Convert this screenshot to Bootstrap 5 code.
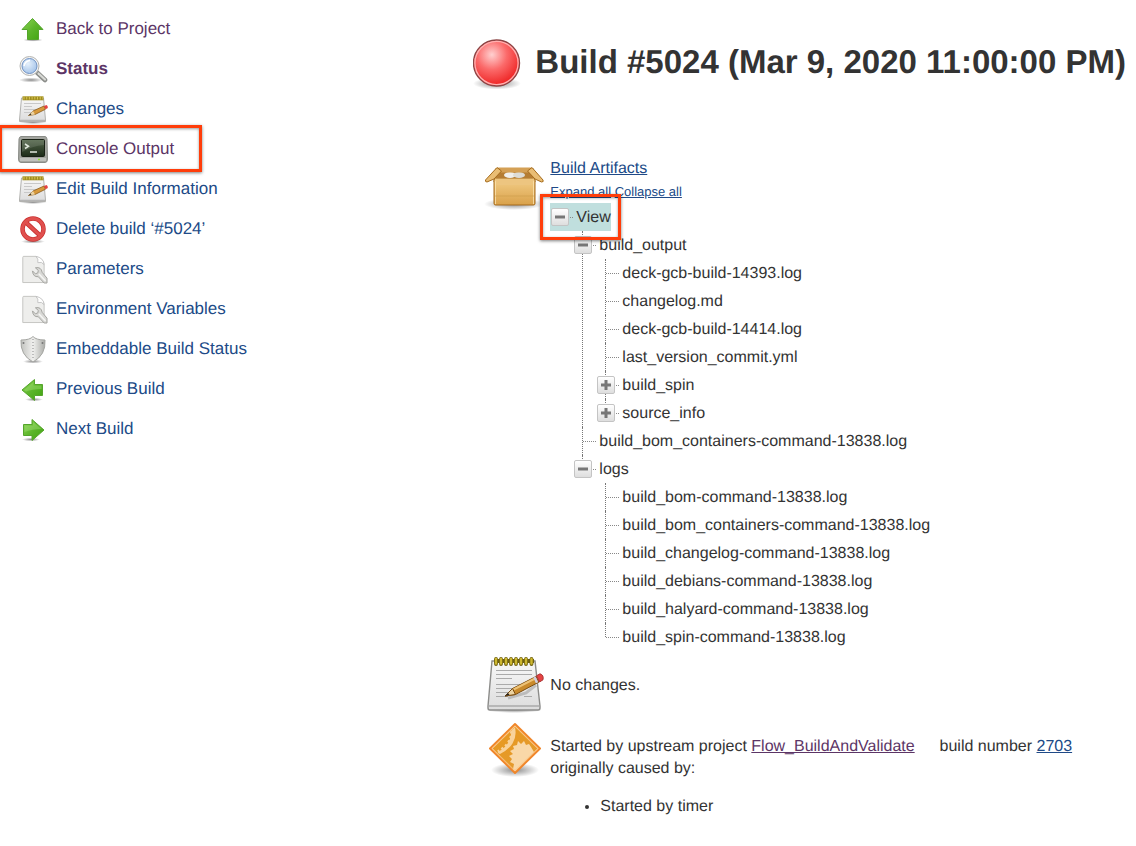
<!DOCTYPE html>
<html lang="en">
<head>
<meta charset="utf-8">
<meta name="viewport" content="width=device-width, initial-scale=1">
<title>Build #5024</title>
<link href="https://cdn.jsdelivr.net/npm/bootstrap@5.3.0/dist/css/bootstrap.min.css" rel="stylesheet">
<style>
  body { font: 16px/22px "Liberation Sans", Arial, sans-serif; color: #333; background: #fff; text-rendering: geometricPrecision; }
  a { color: #204a87; }
  a.seen { color: #5c3566; }
  .task { height: 40px; font-size: 17px; padding-left: 16px; }
  .task svg { width: 32px; height: 32px; }
  .task a { text-decoration: none; padding-top: 2px; }
  .task a:hover { text-decoration: underline; }
  .build-head { padding-top: 38px; gap: 14px; }
  .build-head svg { width: 48px; height: 52px; }
  .build-head h1 { font-size: 33px; line-height: 48px; font-weight: 700; }
  .build-body { padding: 66px 0 0 11px; }
  .facts { gap: 6px; }
  .facts > svg { width: 60px; height: 60px; }
  .artifact-title { line-height: 24px; padding-top: 1px; }
  .tree-tools { font-size: 13px; line-height: 22px; }
  .change-text { padding-top: 2px; }
  .cause-text { padding-top: 17px; }
  .cause-text ul { padding-left: 50px; }
  .upstream-gap { width: 16px; }

  /* artifact tree */
  .tree ul { padding-left: 23px; }
  .tree li { position: relative; }
  .tree li::before { content: ""; position: absolute; left: 9px; top: 0; bottom: 0; border-left: 1px dotted #777; }
  .tree li:last-child::before { bottom: auto; height: 14px; }
  .node { display: inline-flex; align-items: center; height: 28px; padding: 2px 0 0 26px; position: relative; white-space: nowrap; }
  .node::before { content: ""; position: absolute; left: 10px; width: 13px; top: 14px; border-top: 1px dotted #888; }
  .node.picked { background: #c0dfde; }
  .fold { position: absolute; left: 1px; top: 5px; width: 18px; height: 18px; padding: 0; border: 1px solid #c4c4c4; border-radius: 2px; background: linear-gradient(#fff, #dedede); display: flex; }
  .fold svg { width: 16px; height: 16px; }

  /* red call-outs drawn over the page */
  .callout { position: relative; }
  .callout::after { content: ""; position: absolute; z-index: 2; border: 3px solid #ff3d0a; box-shadow: 0 1px 3px rgba(0,0,0,.5), inset 0 1px 3px rgba(0,0,0,.4); pointer-events: none; }
  .task.callout { width: 202px; }
  .task.callout::after { inset: -3px 0 -4px -1px; }
  .node.callout::after { inset: -9px -10px -9px -10px; }
</style>
</head>
<body>
<svg width="0" height="0" class="position-absolute" aria-hidden="true">
  <defs>
    <linearGradient id="green" x1="0" y1="0" x2="1" y2="1"><stop offset="0" stop-color="#8fd856"/><stop offset=".5" stop-color="#5cb52b"/><stop offset="1" stop-color="#3fa30f"/></linearGradient>
    <linearGradient id="paper" x1="0" y1="0" x2="0" y2="1"><stop offset="0" stop-color="#f8f8f8"/><stop offset="1" stop-color="#dcdcdc"/></linearGradient>
    <linearGradient id="metal"><stop offset="0" stop-color="#c2c3bf"/><stop offset=".5" stop-color="#f0f0ee"/><stop offset="1" stop-color="#aaaba7"/></linearGradient>
    <linearGradient id="screen" x1="0" y1="0" x2="0" y2="1"><stop offset="0" stop-color="#53664a"/><stop offset="1" stop-color="#1c2b18"/></linearGradient>
    <linearGradient id="wood" x1="0" y1="0" x2="0" y2="1"><stop offset="0" stop-color="#f3ce88"/><stop offset="1" stop-color="#d9a14a"/></linearGradient>
    <linearGradient id="amber" x1="0" y1="0" x2="1" y2="1"><stop offset="0" stop-color="#e8991f"/><stop offset="1" stop-color="#e39a30"/></linearGradient>
    <radialGradient id="lens" cx=".4" cy=".35" r=".7"><stop offset="0" stop-color="#e6f1fc"/><stop offset="1" stop-color="#a3c2e8"/></radialGradient>
    <radialGradient id="ruby" cx=".4" cy=".32" r=".65"><stop offset="0" stop-color="#ffd0d0"/><stop offset=".5" stop-color="#fb6a6a"/><stop offset="1" stop-color="#ef2929"/></radialGradient>
    <radialGradient id="shade"><stop offset="0" stop-color="#000" stop-opacity=".45"/><stop offset="1" stop-color="#000" stop-opacity="0"/></radialGradient>
    <symbol id="i-notepad" viewBox="0 0 60 60">
      <ellipse cx="30" cy="55" rx="28" ry="3" fill="url(#shade)"/>
      <path d="M8 6H51L56 51V53Q56 55 54 55H6Q4 55 4 53V51Z" fill="url(#paper)" stroke="#8c8c8a" stroke-width="1.400"/>
      <path d="M5 51H55" stroke="#aaa" stroke-width="1.500"/>
      <path d="M12 15.500H48M12 19.500H48M12 23.500H28M12 29.500H40M12 33.500H36M12 37.500H31M12 41.500H24M40 41.500H48" stroke="#aaa" stroke-width="1.100"/>
      <path d="M10 6H50" stroke="#6d5f10" stroke-width="4"/>
      <path d="M12 4V9M17 4V9M22 4V9M27 4V9M32 4V9M37 4V9M42 4V9M47.500 4V9" stroke="#6d5f10" stroke-width="3.800" stroke-linecap="round"/>
      <path d="M12 4V8.500M17 4V8.500M22 4V8.500M27 4V8.500M32 4V8.500M37 4V8.500M42 4V8.500M47.500 4V8.500" stroke="#cdb72f" stroke-width="2.400" stroke-linecap="round"/>
      <path d="M24 43L42 38L52 30" stroke="#000" stroke-opacity=".18" stroke-width="3" fill="none"/>
      <path d="M21 41L28.500 33.500L52 21.500L55 27L31.500 39.500Z" fill="#c98a2c" stroke="#7b4c0f"/>
      <path d="M29.500 34.500L52 23" stroke="#edc276" stroke-width="2"/>
      <path d="M21 41L28.500 33.500L31.500 39.500Z" fill="#ecd3a2" stroke="#7b4c0f"/>
      <path d="M21 41L24 38L25.500 39.700Z" fill="#222"/>
      <path d="M52.500 20.800L56 18.800Q60 20 59 24.800L55.500 27Z" fill="#e54343" stroke="#a33"/>
      <path d="M50.500 22L53 27.700" stroke="#cfcfe0" stroke-width="2.500"/>
    </symbol>
    <symbol id="i-notepad-small" viewBox="0 0 32 32">
      <ellipse cx="17" cy="30.300" rx="14" ry="1.700" fill="url(#shade)"/>
      <path d="M5.500 6H27.500L29.500 28V29.500H3.500V28Z" fill="url(#paper)" stroke="#b2b2af"/>
      <path d="M4 28.300H29" stroke="#aaa"/>
      <path d="M8 11.500H25M8 14.500H16M8 17.500H21M8 20.500H17" stroke="#c8c8c8"/>
      <path d="M6.500 6.300H27.500" stroke="#a08d22" stroke-width="4"/>
      <path d="M7.500 6H27" stroke="#d8c550" stroke-width="3" stroke-dasharray="1 1.700"/>
      <path d="M12.500 23.500L17 19L28 14L29.500 17.200L19 22.500Z" fill="#d89a3c" stroke="#8a5a1a" stroke-width=".8"/>
      <path d="M12.500 23.500L17 19L19 22.500Z" fill="#ecd3a2"/><path d="M12.500 23.500L14.500 21.500L15.500 22.700Z" fill="#333"/>
      <path d="M28 14L30.500 13Q32.500 14.500 31.500 16.300L29.500 17.300Z" fill="#e54343"/>
    </symbol>
    <symbol id="i-doc-wrench" viewBox="0 0 32 33">
      <path d="M6.500 5.500Q6.500 4.500 7.500 4.500H20Q28 7 28.500 13V31.500H6.500Z" fill="#eeeeec" stroke="#c4c4c1"/>
      <path d="M20 4.500Q23 7 22 11Q26 9.500 28.500 13Q28 6 20 4.500Z" fill="#fff" stroke="#bbb" stroke-width=".8"/>
      <path d="M16.500 19.500L19.500 22.500L22 21.500L22.500 19L19.500 16.300Q25.500 15 26.500 21L31.500 27V32H28.500L22.500 25.500Q17 26 16.500 19.500Z" fill="#d9d9d6" stroke="#a3a39f"/>
      <path d="M23 22.500L30 30" stroke="#f6f6f4" stroke-width="1.500"/>
    </symbol>
    <symbol id="i-up" viewBox="0 0 32 32">
      <ellipse cx="17" cy="28" rx="10" ry="1.600" fill="url(#shade)"/>
      <path d="M16.500 6.500L27 17.500H22.500V27.500H11.500V17.500H6Z" fill="url(#green)" stroke="#55a52c"/>
    </symbol>
    <symbol id="i-left" viewBox="0 0 32 32">
      <ellipse cx="18" cy="27.500" rx="9" ry="1.800" fill="url(#shade)"/>
      <path d="M6 18L18.500 7.500V12.500H26.500V23.500H18.500V28.500Z" fill="url(#green)" stroke="#55a52c"/>
      <path d="M8 18L17.500 10V13.500H25.500V17Q16 17 10 19.500Z" fill="#a8e07c" fill-opacity=".4"/>
    </symbol>
    <symbol id="i-right" viewBox="0 0 32 32">
      <ellipse cx="15" cy="27.500" rx="9" ry="1.800" fill="url(#shade)"/>
      <path d="M28 18L16 7.500V12.500H7.500V23.500H16V28.500Z" fill="url(#green)" stroke="#55a52c"/>
      <path d="M25.500 17L17 10V13.500H8.500V20Q16 17 25.500 17Z" fill="#a8e07c" fill-opacity=".4"/>
    </symbol>
  </defs>
</svg>

<div class="container-fluid p-0">
  <div class="row g-0">
    <nav class="col-12 col-md-5 pt-2" aria-label="Build tasks">
      <div class="task d-flex align-items-center gap-2"><svg aria-hidden="true"><use href="#i-up"/></svg><a href="#" class="seen">Back to Project</a></div>
      <div class="task d-flex align-items-center gap-2">
        <svg viewBox="0 0 32 32" aria-hidden="true"><ellipse cx="15" cy="28" rx="12" ry="2.500" fill="url(#shade)"/><path d="M21 20.500L29 28" stroke="#8b8d8a" stroke-width="4.600" stroke-linecap="round"/><path d="M22.500 21.500L29 27.500" stroke="#d9dad6" stroke-width="2.200" stroke-linecap="round"/><circle cx="13.500" cy="14" r="9.500" fill="#f4f4f4" stroke="#b5b5b2"/><circle cx="13.500" cy="14" r="7.500" fill="url(#lens)" stroke="#7193c4"/><path d="M8 14Q9 9 14 8.500" stroke="#fff" stroke-width="1.500" fill="none"/></svg>
        <a href="#" class="seen fw-bold">Status</a></div>
      <div class="task d-flex align-items-center gap-2"><svg aria-hidden="true"><use href="#i-notepad-small"/></svg><a href="#">Changes</a></div>
      <div class="task callout d-flex align-items-center gap-2">
        <svg viewBox="0 0 32 32" aria-hidden="true"><path d="M5 4.500H29Q30.500 4.500 31 7L31.500 27Q31.500 30.500 29 30.500H5Q2.500 30.500 2.500 27L3 7Q3.500 4.500 5 4.500Z" fill="#a3a59f" stroke="#8a8c87"/><path d="M4 27.500H30" stroke="#c0c1bd" stroke-width="3"/><rect x="5.500" y="7.500" width="23" height="17" rx="1" fill="url(#screen)" stroke="#182014"/><path d="M6 8H28V13Q16 14 6 20Z" fill="#fff" fill-opacity=".12"/><path d="M9 12L12.500 14.300L9 16.500M14 20H21" stroke="#e0e8dc" stroke-width="1.500" fill="none"/><path d="M22 27.500H24" stroke="#8ae234" stroke-width="1.500"/></svg>
        <a href="#" class="seen">Console Output</a></div>
      <div class="task d-flex align-items-center gap-2"><svg aria-hidden="true"><use href="#i-notepad-small"/></svg><a href="#">Edit Build Information</a></div>
      <div class="task d-flex align-items-center gap-2">
        <svg viewBox="0 0 32 32" aria-hidden="true"><ellipse cx="17" cy="29.500" rx="12" ry="2" fill="url(#shade)"/><circle cx="17" cy="17" r="10.500" fill="#fff" fill-opacity=".8" stroke="#c9302f" stroke-width="4.500"/><path d="M10 10.500L24 23.500" stroke="#c9302f" stroke-width="4.500"/><circle cx="17" cy="17" r="10.500" fill="none" stroke="#e0504e" stroke-width="3"/><path d="M9.500 10L24.500 24" stroke="#e0504e" stroke-width="3"/></svg>
        <a href="#">Delete build ‘#5024’</a></div>
      <div class="task d-flex align-items-center gap-2"><svg aria-hidden="true"><use href="#i-doc-wrench"/></svg><a href="#">Parameters</a></div>
      <div class="task d-flex align-items-center gap-2"><svg aria-hidden="true"><use href="#i-doc-wrench"/></svg><a href="#">Environment Variables</a></div>
      <div class="task d-flex align-items-center gap-2">
        <svg viewBox="0 0 32 32" aria-hidden="true"><ellipse cx="17" cy="29.500" rx="10" ry="2" fill="url(#shade)"/><path d="M17 4.500Q20 8 29 8Q30 23 17 30Q4 23 5 8Q14 8 17 4.500Z" fill="url(#metal)" stroke="#a6a7a3"/><path d="M17 7V27" stroke="#aaa" stroke-width="1.500" stroke-dasharray="1 2"/><circle cx="7.500" cy="11" r="1" fill="#777"/><circle cx="26.500" cy="11" r="1" fill="#777"/></svg>
        <a href="#">Embeddable Build Status</a></div>
      <div class="task d-flex align-items-center gap-2"><svg aria-hidden="true"><use href="#i-left"/></svg><a href="#">Previous Build</a></div>
      <div class="task d-flex align-items-center gap-2"><svg aria-hidden="true"><use href="#i-right"/></svg><a href="#">Next Build</a></div>
    </nav>

    <main class="col-12 col-md-7">
      <header class="build-head d-flex align-items-start">
        <svg class="flex-shrink-0" viewBox="0 0 48 52" role="img" aria-label="Failed"><ellipse cx="24" cy="45.500" rx="24" ry="6" fill="url(#shade)"/><circle cx="23.500" cy="25" r="23" fill="url(#ruby)" stroke="#8c4545" stroke-width="1.400"/><circle cx="23.500" cy="25" r="21.600" fill="none" stroke="#ffb0b0" stroke-width="1.300"/></svg>
        <h1 class="m-0">Build #5024 (Mar 9, 2020 11:00:00 PM)</h1>
      </header>

      <div class="build-body">
        <section class="facts d-flex align-items-start">
          <svg class="flex-shrink-0" viewBox="0 0 60 60" aria-hidden="true">
            <ellipse cx="30" cy="48" rx="30" ry="6" fill="url(#shade)"/>
            <path d="M12 12.500H49L51 26H10Z" fill="#b57d33" stroke="#8f5902"/>
            <ellipse cx="26" cy="19" rx="6" ry="3" fill="#f0efeb"/><ellipse cx="35" cy="19" rx="6" ry="3" fill="#dddcd6"/>
            <path d="M14 11.500H47L44 16.500H17Z" fill="#d4a055"/>
            <rect x="10" y="22.500" width="41" height="26.500" rx="1.500" fill="url(#wood)" stroke="#a56b1c"/>
            <path d="M11.500 48V25H49.500V48" fill="none" stroke="#fbe3b0" stroke-opacity=".8"/>
            <path d="M11 40H50" stroke="#c99746" stroke-opacity=".5"/>
            <path d="M13 11.500L17.500 15L10 23L3 26Q1 26 1.500 24Z" fill="#e9bd74" stroke="#a56b1c"/>
            <path d="M48 11.500L43.500 15L51 23L57.500 26Q60 26 59 24Z" fill="#e9bd74" stroke="#a56b1c"/>
            <path d="M11 22.500H50L48 29H13Z" fill="#edc580"/>
          </svg>
          <div>
            <div class="artifact-title"><a href="#">Build Artifacts</a></div>
            <div class="tree-tools"><a href="#">Expand all</a> <a href="#">Collapse all</a></div>
            <ul class="tree list-unstyled m-0">
              <li><span class="node picked callout"><button class="fold" type="button" aria-label="Collapse View"><svg viewBox="0 0 16 16"><path d="M3 8H13" stroke="#777" stroke-width="3"/></svg></button>View</span>
                <ul class="list-unstyled">
                  <li><span class="node"><button class="fold" type="button" aria-label="Collapse build_output"><svg viewBox="0 0 16 16"><path d="M3 8H13" stroke="#777" stroke-width="3"/></svg></button>build_output</span>
                    <ul class="list-unstyled">
                      <li><span class="node">deck-gcb-build-14393.log</span></li>
                      <li><span class="node">changelog.md</span></li>
                      <li><span class="node">deck-gcb-build-14414.log</span></li>
                      <li><span class="node">last_version_commit.yml</span></li>
                      <li><span class="node"><button class="fold" type="button" aria-label="Expand build_spin"><svg viewBox="0 0 16 16"><path d="M3 8H13M8 3V13" stroke="#777" stroke-width="3"/></svg></button>build_spin</span></li>
                      <li><span class="node"><button class="fold" type="button" aria-label="Expand source_info"><svg viewBox="0 0 16 16"><path d="M3 8H13M8 3V13" stroke="#777" stroke-width="3"/></svg></button>source_info</span></li>
                    </ul>
                  </li>
                  <li><span class="node">build_bom_containers-command-13838.log</span></li>
                  <li><span class="node"><button class="fold" type="button" aria-label="Collapse logs"><svg viewBox="0 0 16 16"><path d="M3 8H13" stroke="#777" stroke-width="3"/></svg></button>logs</span>
                    <ul class="list-unstyled">
                      <li><span class="node">build_bom-command-13838.log</span></li>
                      <li><span class="node">build_bom_containers-command-13838.log</span></li>
                      <li><span class="node">build_changelog-command-13838.log</span></li>
                      <li><span class="node">build_debians-command-13838.log</span></li>
                      <li><span class="node">build_halyard-command-13838.log</span></li>
                      <li><span class="node">build_spin-command-13838.log</span></li>
                    </ul>
                  </li>
                </ul>
              </li>
            </ul>
          </div>
        </section>

        <section class="facts d-flex align-items-center mt-1">
          <svg class="flex-shrink-0" aria-hidden="true"><use href="#i-notepad"/></svg>
          <div class="change-text">No changes.</div>
        </section>

        <section class="facts d-flex align-items-start mt-1">
          <svg class="flex-shrink-0" viewBox="0 0 60 60" aria-hidden="true">
            <ellipse cx="31" cy="51" rx="24" ry="7" fill="url(#shade)"/>
            <path d="M31 5L56 29.500L31 54L6 29.500Z" fill="#f9d8a8" stroke="#f0862a" stroke-width="2" stroke-linejoin="round"/>
            <path d="M31 7.500L53.500 29.500L50 33L47 28L45 25L42 26L40 22L37 25L34 22L33 26L29 27L30 30L26 32L29 35L25 37L28 40L26 43L30 45L29 50L8.500 29.500Z" fill="url(#amber)"/>
            <path d="M27.500 11L31 8.500Q33 17 28.500 24.500Q25 30.500 16 35L13.500 33Q22 29 25 22Q27 18 27.500 11Z" fill="#f9d29a"/>
            <path d="M28 12Q28.500 19 24.500 24.500Q20.500 30 14 33" stroke="#f9d29a" stroke-width="4" stroke-dasharray="2.500 2.500" fill="none"/>
            <path d="M31 7.500L53.500 29.500L31 51.500L8.500 29.500Z" fill="none" stroke="#fbc27a" stroke-opacity=".7"/>
          </svg>
          <div class="cause-text">
            <div>Started by upstream project <a href="#" class="seen">Flow_BuildAndValidate</a> <span class="upstream-gap d-inline-block"></span> build number <a href="#">2703</a></div>
            <div>originally caused by:</div>
            <ul class="mt-3 mb-0"><li>Started by timer</li></ul>
          </div>
        </section>
      </div>
    </main>
  </div>
</div>
<script src="https://cdn.jsdelivr.net/npm/bootstrap@5.3.0/dist/js/bootstrap.bundle.min.js"></script>
</body>
</html>
